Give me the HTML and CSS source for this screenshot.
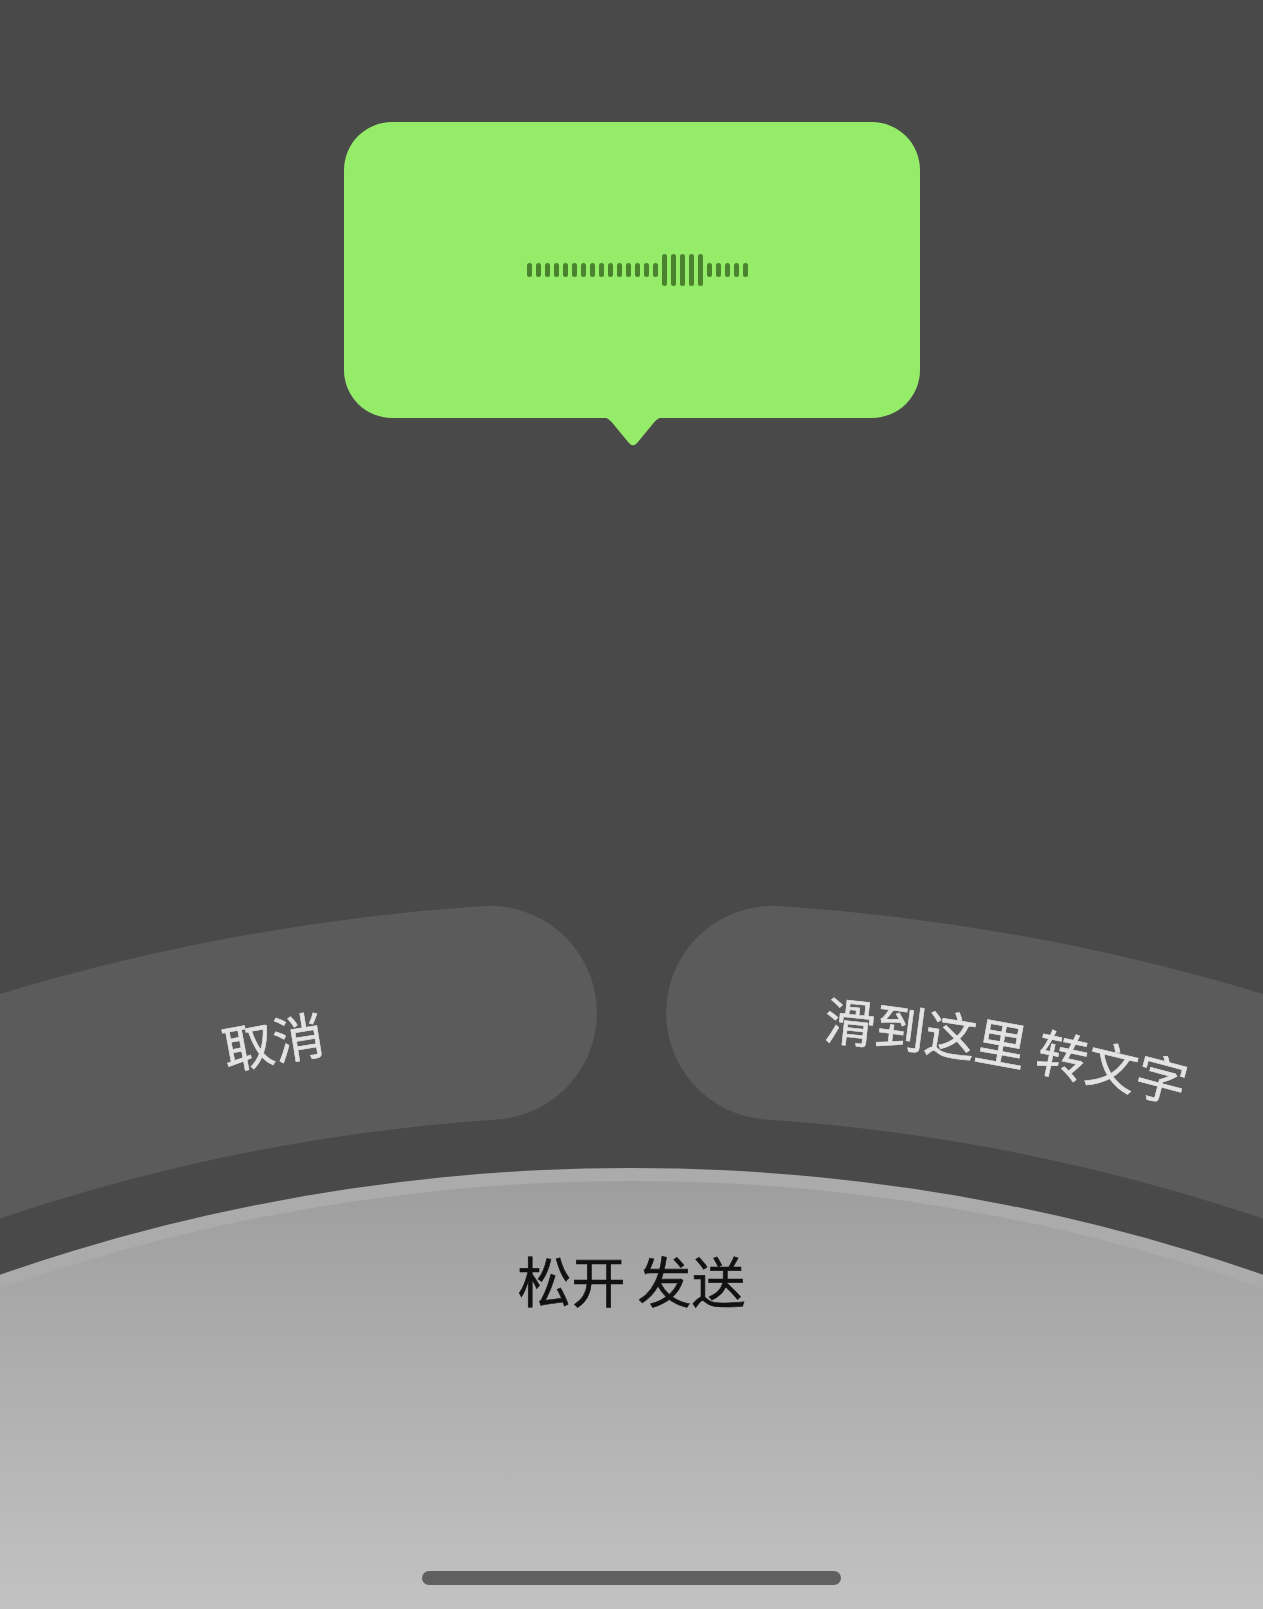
FILE: index.html
```html
<!DOCTYPE html>
<html lang="zh-CN">
<head>
<meta charset="utf-8">
<title>松开 发送</title>
<link rel="stylesheet" href="styles.css">
</head>
<body>
<div class="screen">
  <div class="bubble-area">
    <div class="bubble">
      <div class="wave">
        <span class="bar"></span><span class="bar"></span><span class="bar"></span><span class="bar"></span><span class="bar"></span>
        <span class="bar"></span><span class="bar"></span><span class="bar"></span><span class="bar"></span><span class="bar"></span>
        <span class="bar"></span><span class="bar"></span><span class="bar"></span><span class="bar"></span><span class="bar"></span>
        <span class="bar tall"></span><span class="bar tall"></span><span class="bar tall"></span><span class="bar tall"></span><span class="bar tall"></span>
        <span class="bar"></span><span class="bar"></span><span class="bar"></span><span class="bar"></span><span class="bar"></span>
      </div>
      <svg class="tail" width="64" height="31" viewBox="0 0 64 31">
        <path d="M0 0 C5 0 8 2 11 5.5 L27.5 25.5 Q32 31 36.5 25.5 L53 5.5 C56 2 59 0 64 0 Z" fill="#95ec69"/>
      </svg>
    </div>
  </div>

  <div class="controls">
    <svg class="arcs" width="1263" height="729" viewBox="0 0 1263 729">
      <defs>
        <linearGradient id="pad" gradientUnits="userSpaceOnUse" x1="0" y1="301" x2="0" y2="729">
          <stop offset="0" stop-color="#9e9e9e"/>
          <stop offset="1" stop-color="#c2c2c2"/>
        </linearGradient>
        <path id="mid" d="M -706.8 615.1 A 2082 2082 0 0 1 1969.8 615.1"/>
      </defs>
      <path d="M -706.8 615.1 A 2082 2082 0 0 1 489.9 132.8" fill="none" stroke="#5b5b5b" stroke-width="214" stroke-linecap="round"/>
      <path d="M 773.1 132.8 A 2082 2082 0 0 1 1969.8 615.1" fill="none" stroke="#5b5b5b" stroke-width="214" stroke-linecap="round"/>
      <text class="arc-label" text-anchor="middle" dominant-baseline="central"><textPath href="#mid" startOffset="37.6%">取消</textPath></text>
      <text class="arc-label" text-anchor="middle" dominant-baseline="central"><textPath href="#mid" startOffset="63%">滑到这里 转文字</textPath></text>
      <circle cx="631.5" cy="2210" r="1922" fill="#ababab"/>
      <circle cx="631.5" cy="2210" r="1909" fill="url(#pad)"/>
    </svg>
    <div class="send-label">松开 发送</div>
    <div class="home-bar"></div>
  </div>
</div>
</body>
</html>
```

FILE: styles.css
```css
html, body {
  margin: 0;
  padding: 0;
  background: #494949;
}

.screen {
  width: 1263px;
  height: 1609px;
  display: flex;
  flex-direction: column;
  overflow: hidden;
  font-family: "Noto Sans CJK SC", "Noto Sans", sans-serif;
}

.bubble-area {
  display: flex;
  justify-content: center;
  padding-top: 122px;
}

.bubble {
  position: relative;
  width: 576px;
  height: 296px;
  border-radius: 48px;
  background: #95ec69;
  display: flex;
  align-items: center;
  justify-content: center;
}

.wave {
  display: flex;
  align-items: center;
  gap: 4px;
  margin-left: 12px;
}

.bar {
  display: block;
  width: 5px;
  height: 14px;
  border-radius: 2.5px;
  background: #4b822d;
}

.bar.tall {
  height: 32px;
}

.tail {
  position: absolute;
  left: 257px;
  bottom: -30px;
  display: block;
}

.controls {
  position: relative;
  margin-top: auto;
  height: 729px;
  display: flex;
  flex-direction: column;
  align-items: center;
}

.arcs {
  position: absolute;
  left: 0;
  top: 0;
  display: block;
}

.arc-label {
  font-family: "Noto Sans CJK SC", "Noto Sans", sans-serif;
  font-size: 51px;
  fill: #e3e3e3;
  stroke: #e3e3e3;
  stroke-width: 0.6px;
}

.send-label {
  position: relative;
  margin-top: 373px;
  font-size: 54px;
  line-height: 54px;
  font-weight: 400;
  color: #111111;
  white-space: pre;
  -webkit-text-stroke: 0.6px #111111;
}

.home-bar {
  position: relative;
  margin-top: auto;
  margin-bottom: 24px;
  width: 419px;
  height: 14px;
  border-radius: 7px;
  background: #606060;
}
```
